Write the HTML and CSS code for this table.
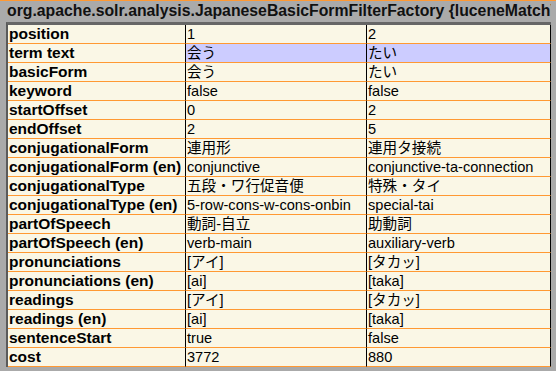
FILE: index.html
```html
<!DOCTYPE html>
<html lang="ja">
<head>
<meta charset="utf-8">
<title>Analysis</title>
<link rel="stylesheet" href="styles.css">
</head>
<body>
<div class="page">
  <div class="title">org.apache.solr.analysis.JapaneseBasicFormFilterFactory {luceneMatchVersion=LUCENE_40}</div>
  <div class="grid">
    <div class="cell label">position</div><div class="cell val">1</div><div class="cell val">2</div>
    <div class="cell label">term text</div><div class="cell val hl">会う</div><div class="cell val hl">たい</div>
    <div class="cell label">basicForm</div><div class="cell val">会う</div><div class="cell val">たい</div>
    <div class="cell label">keyword</div><div class="cell val">false</div><div class="cell val">false</div>
    <div class="cell label">startOffset</div><div class="cell val">0</div><div class="cell val">2</div>
    <div class="cell label">endOffset</div><div class="cell val">2</div><div class="cell val">5</div>
    <div class="cell label">conjugationalForm</div><div class="cell val">連用形</div><div class="cell val">連用タ接続</div>
    <div class="cell label">conjugationalForm (en)</div><div class="cell val">conjunctive</div><div class="cell val">conjunctive-ta-connection</div>
    <div class="cell label">conjugationalType</div><div class="cell val">五段・ワ行促音便</div><div class="cell val">特殊・タイ</div>
    <div class="cell label">conjugationalType (en)</div><div class="cell val">5-row-cons-w-cons-onbin</div><div class="cell val">special-tai</div>
    <div class="cell label">partOfSpeech</div><div class="cell val">動詞-自立</div><div class="cell val">助動詞</div>
    <div class="cell label">partOfSpeech (en)</div><div class="cell val">verb-main</div><div class="cell val">auxiliary-verb</div>
    <div class="cell label">pronunciations</div><div class="cell val">[アイ]</div><div class="cell val">[タカッ]</div>
    <div class="cell label">pronunciations (en)</div><div class="cell val">[ai]</div><div class="cell val">[taka]</div>
    <div class="cell label">readings</div><div class="cell val">[アイ]</div><div class="cell val">[タカッ]</div>
    <div class="cell label">readings (en)</div><div class="cell val">[ai]</div><div class="cell val">[taka]</div>
    <div class="cell label">sentenceStart</div><div class="cell val">true</div><div class="cell val">false</div>
    <div class="cell label">cost</div><div class="cell val">3772</div><div class="cell val">880</div>
  </div>
</div>
</body>
</html>
```

FILE: styles.css
```css
html, body {
  margin: 0;
  padding: 0;
  background: #aaaaaa;
  overflow: hidden;
}
.page {
  width: 556px;
  height: 371px;
  border-top: 1px solid #ff9933;
  box-sizing: border-box;
}
.title {
  box-sizing: border-box;
  width: 551px;
  height: 21px;
  padding: 0 0 1px 7px;
  line-height: 20px;
  font-family: "Liberation Sans", Arial, sans-serif;
  font-weight: bold;
  font-size: 15.8px;
  color: #111;
  white-space: nowrap;
  overflow: hidden;
}
.grid {
  margin-left: 6px;
  width: 545px;
  box-sizing: border-box;
  display: grid;
  grid-template-columns: 178px 181px 184px;
  border-top: 3px solid #666666;
  border-left: 2px solid #5a5a5a;
}
.cell {
  box-sizing: border-box;
  height: 19px;
  line-height: 18px;
  background: #faf7e6;
  border-bottom: 1px solid #ff9933;
  border-right: 1px solid #000;
  white-space: nowrap;
  overflow: hidden;
  color: #000;
}
.label {
  padding-left: 1px;
  font-family: "Liberation Sans", Arial, sans-serif;
  font-weight: bold;
  font-size: 15.5px;
}
.val {
  padding-left: 1px;
  font-family: "Liberation Sans", "Noto Sans CJK JP", sans-serif;
  font-size: 14.6px;
}
.hl {
  background: #ccccff;
}
```
